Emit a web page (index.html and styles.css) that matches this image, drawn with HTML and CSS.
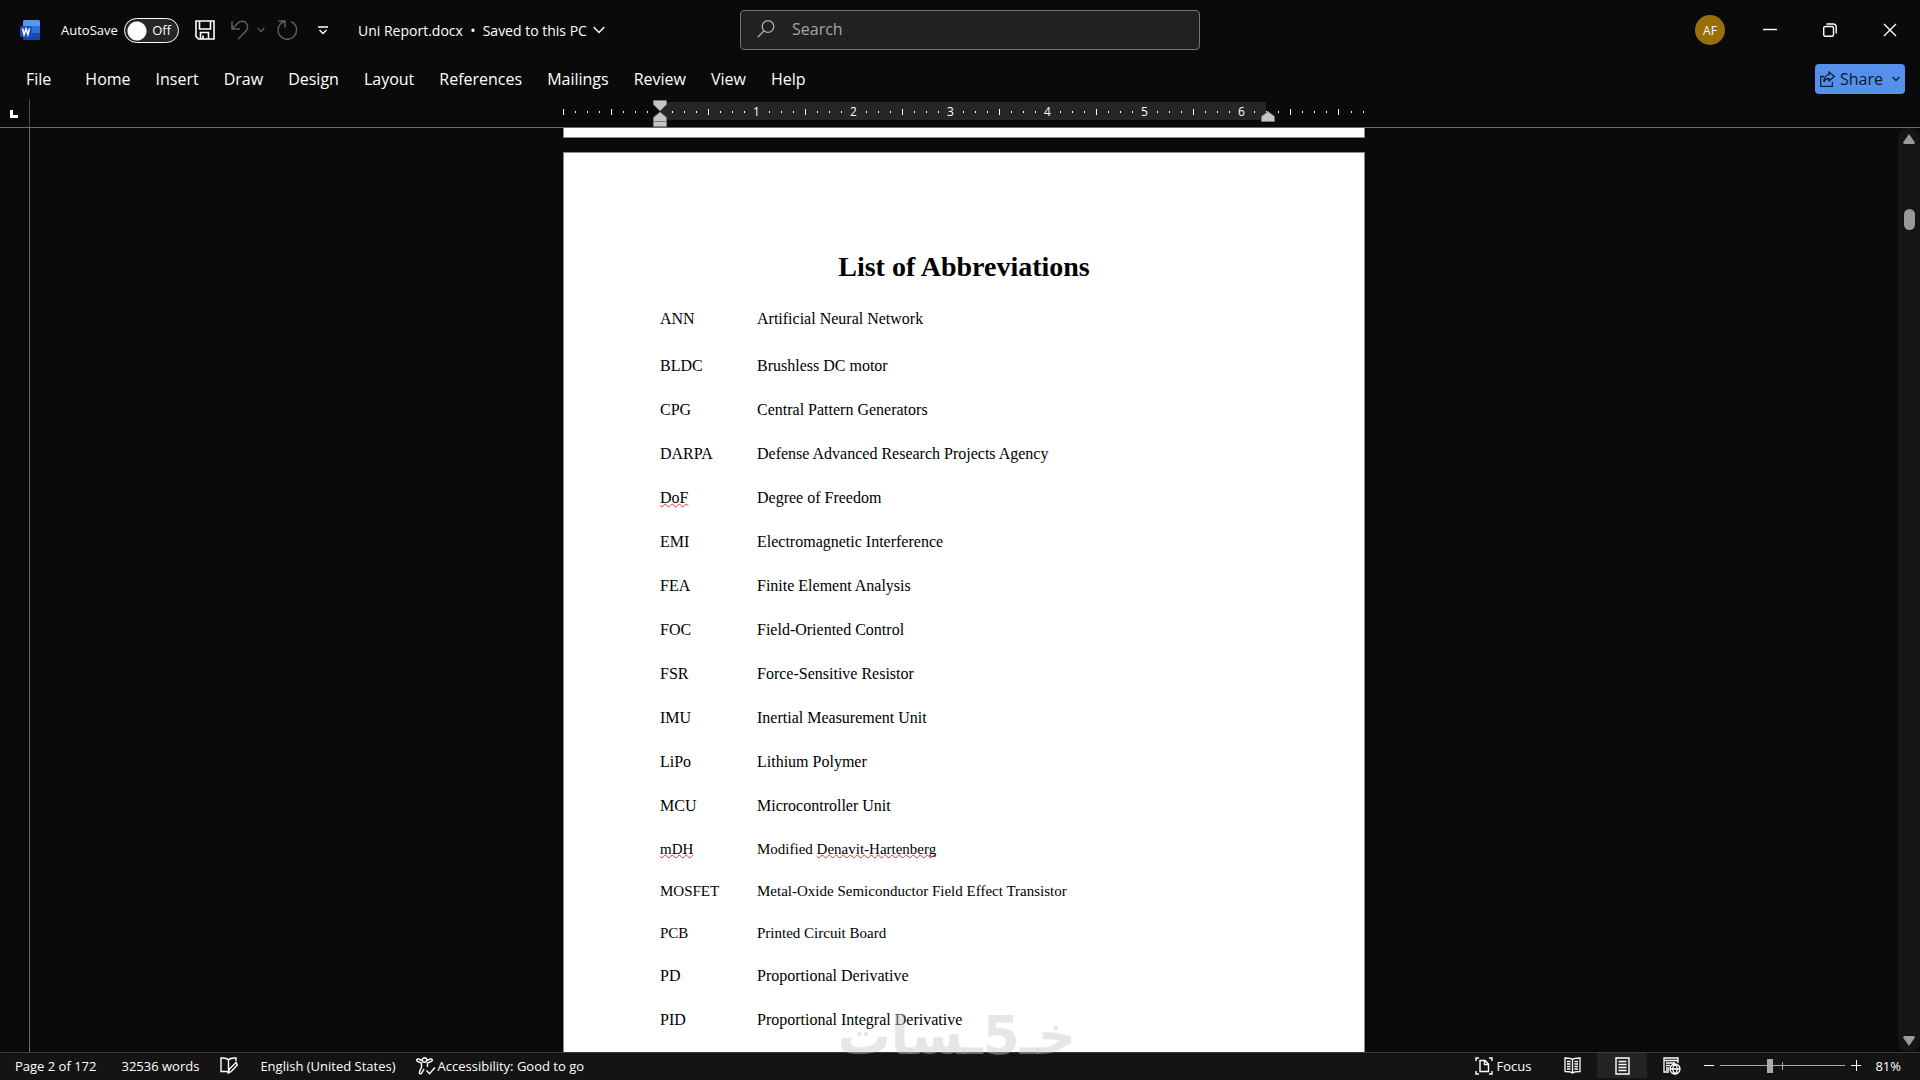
FILE: index.html
```html
<!DOCTYPE html>
<html lang="en">
<head>
    <meta charset="UTF-8">
    <title>Uni Report.docx</title>
    <link rel="stylesheet" href="styles.css">
</head>
<body>
<div id="app">
    <header id="titlebar">
        <div class="quick">
            <svg class="logo" width="20" height="20" viewBox="0 0 20 20">
                <rect x="3" y="0" width="17" height="20" rx="2" fill="#2f6fdc"/>
                <path d="M5 0h13a2 2 0 0 1 2 2v4H3V2a2 2 0 0 1 2-2z" fill="#5a97f2"/>
                <path d="M3 13h17v5a2 2 0 0 1-2 2H5a2 2 0 0 1-2-2z" fill="#1748ad"/>
                <rect x="0" y="6" width="12" height="11" rx="2" fill="#1b4fbd"/>
                <path d="M2.5 8.5l1.6 6 1.9-5.5 1.9 5.5 1.6-6" fill="none" stroke="#fff" stroke-width="1.6"/>
            </svg>
            <label for="autosave">AutoSave</label>
            <span class="switch">
                <input type="checkbox" id="autosave">
                <span>Off</span>
            </span>
            <button class="save" aria-label="Save">
                <svg width="20" height="20" viewBox="0 0 20 20" fill="none" stroke="#fff" stroke-width="1.6">
                    <path d="M1 1h18v18H3.500L1 16.500zM4.500 1v8h11V1M5.500 19v-6.500h8V19M8 15.500V19"/>
                </svg>
            </button>
            <button class="undo" aria-label="Undo">
                <svg width="18" height="20" viewBox="0 0 18 20" fill="none" stroke="#5c5c5c" stroke-width="1.5">
                    <path d="M1 1v8h8M1.500 8.500L7 3c3-3 7.500-2 9 1.200 1.300 2.800.5 5.300-1.500 7.300L7 19.300"/>
                </svg>
            </button>
            <button class="undo-more" aria-label="Undo list">
                <svg width="8" height="6" viewBox="0 0 8 6" fill="none" stroke="#5c5c5c" stroke-width="1.300"><path d="M.7 1L4 4.500 7.300 1"/></svg>
            </button>
            <button class="redo" aria-label="Repeat">
                <svg width="21" height="20" viewBox="0 0 21 20" fill="none" stroke="#5c5c5c" stroke-width="1.500">
                    <path d="M1.500 1H8v6.500M7.500 1.500C3.500 3 1 6 1 10a9.300 9.300 0 0 0 18.600 0c0-4-2.300-7-5.600-8.300"/>
                </svg>
            </button>
            <button class="customize" aria-label="Customize Quick Access Toolbar">
                <svg width="10" height="9" viewBox="0 0 10 9" fill="none" stroke="#fff" stroke-width="1.400"><path d="M0 1h10M1.500 4L5 7.500 8.500 4"/></svg>
            </button>
            <button class="doc-name">Uni Report.docx&nbsp; •&nbsp; Saved to this PC
                <svg width="12" height="8" viewBox="0 0 12 8" fill="none" stroke="#fff" stroke-width="1.400"><path d="M.7 1L6 6.500 11.300 1"/></svg>
            </button>
        </div>
        <div class="search">
            <svg width="18" height="18" viewBox="0 0 18 18" fill="none" stroke="#b0b0b0" stroke-width="1.300"><circle cx="11" cy="6.500" r="5.800"/><path d="M7 10.800L.6 17.400"/></svg>
            <input type="text" placeholder="Search" aria-label="Search">
        </div>
        <div class="window">
            <button class="avatar">AF</button>
            <button aria-label="Minimize"><svg width="14" height="14" viewBox="0 0 14 14"><path d="M0 6.500h14" stroke="#fff" stroke-width="1.400"/></svg></button>
            <button aria-label="Restore"><svg width="14" height="14" viewBox="0 0 14 14" fill="none" stroke="#fff" stroke-width="1.400"><rect x=".7" y="3.500" width="9.800" height="9.800" rx="1.500"/><path d="M3.500 1H10a3.200 3.200 0 0 1 3.200 3.200V10.500"/></svg></button>
            <button aria-label="Close"><svg width="14" height="14" viewBox="0 0 14 14"><path d="M1 1l12 12M13 1L1 13" stroke="#fff" stroke-width="1.400"/></svg></button>
        </div>
    </header>

    <nav id="tabs">
        <a class="file" href="#">File</a>
        <a href="#">Home</a>
        <a href="#">Insert</a>
        <a href="#">Draw</a>
        <a href="#">Design</a>
        <a href="#">Layout</a>
        <a href="#">References</a>
        <a href="#">Mailings</a>
        <a href="#">Review</a>
        <a href="#">View</a>
        <a href="#">Help</a>
        <button class="share">
            <svg width="15" height="16" viewBox="0 0 15 16" fill="none" stroke="#10203c" stroke-width="1.300"><path d="M4 5.500H.7v9.800h11.600V11M9 1l5.300 4.500L9 10V7.500C6.500 7.300 5 8.500 3.800 11 4 6.500 6 3.800 9 3.600z"/></svg>
            Share
            <svg class="arrow" width="8" height="6" viewBox="0 0 8 6" fill="none" stroke="#10203c" stroke-width="1.400"><path d="M.7 1L4 4.500 7.300 1"/></svg>
        </button>
    </nav>

    <div id="ruler">
        <div class="corner"><svg width="8" height="8" viewBox="0 0 8 8"><path d="M0 0h3v5h5v3H0z" fill="#fff"/></svg></div>
        <div class="track">
            <div class="scale">
                <div class="band"></div>
                <svg class="ticks" width="802" height="8">
                    <defs>
                        <pattern id="inch" x="0" y="0" width="97" height="8" patternUnits="userSpaceOnUse">
                            <path d="M12 3h1v2h-1zM24 3h1v2h-1zM36 3h1v2h-1zM48 1h1v6h-1zM60 3h1v2h-1zM72 3h1v2h-1zM84 3h1v2h-1z" fill="#fff"/>
                        </pattern>
                    </defs>
                    <rect width="802" height="8" fill="url(#inch)"/>
                    <path d="M0 1h1v6H0zM775 1h1v6h-1z" fill="#fff"/>
                </svg>
                <ol class="numbers">
                    <li>1</li>
                    <li>2</li>
                    <li>3</li>
                    <li>4</li>
                    <li>5</li>
                    <li>6</li>
                </ol>
                <svg class="indent-left" width="14" height="27" viewBox="0 0 14 27" fill="#c6c6c6" stroke="#777">
                    <path d="M.5.500h13v4L7 11 .5 4.500z"/>
                    <path d="M.5 26.500v-9L7 12l6.500 5.500v9zM.5 21.500h13"/>
                </svg>
                <svg class="indent-right" width="14" height="11" viewBox="0 0 14 11" fill="#c6c6c6" stroke="#777"><path d="M.5 10.500v-5L7 .5l6.500 5v5z"/></svg>
            </div>
        </div>
    </div>

    <main id="workspace">
        <div class="side"></div>
        <div class="pages">
            <div class="page previous"></div>
            <article class="page">
                <h1>List of Abbreviations</h1>
                <table>
                    <tr class="first"><td>ANN</td><td>Artificial Neural Network</td></tr>
                    <tr><td>BLDC</td><td>Brushless DC motor</td></tr>
                    <tr><td>CPG</td><td>Central Pattern Generators</td></tr>
                    <tr><td>DARPA</td><td>Defense Advanced Research Projects Agency</td></tr>
                    <tr><td><span class="typo">DoF</span></td><td>Degree of Freedom</td></tr>
                    <tr><td>EMI</td><td>Electromagnetic Interference</td></tr>
                    <tr><td>FEA</td><td>Finite Element Analysis</td></tr>
                    <tr><td>FOC</td><td>Field-Oriented Control</td></tr>
                    <tr><td>FSR</td><td>Force-Sensitive Resistor</td></tr>
                    <tr><td>IMU</td><td>Inertial Measurement Unit</td></tr>
                    <tr><td>LiPo</td><td>Lithium Polymer</td></tr>
                    <tr><td>MCU</td><td>Microcontroller Unit</td></tr>
                    <tr class="small"><td><span class="typo">mDH</span></td><td>Modified <span class="typo">Denavit-Hartenberg</span></td></tr>
                    <tr class="small"><td>MOSFET</td><td>Metal-Oxide Semiconductor Field Effect Transistor</td></tr>
                    <tr class="small"><td>PCB</td><td>Printed Circuit Board</td></tr>
                    <tr><td>PD</td><td>Proportional Derivative</td></tr>
                    <tr><td>PID</td><td>Proportional Integral Derivative</td></tr>
                </table>
            </article>
        </div>
        <div class="scrollbar">
            <svg width="12" height="10" viewBox="0 0 12 10"><path d="M6 0l6 8.500-1 1.500H1L0 8.500z" fill="#9a9a9a"/></svg>
            <div class="thumb"></div>
            <svg class="down" width="12" height="10" viewBox="0 0 12 10"><path d="M6 10l6-8.500L11 0H1L0 1.500z" fill="#9a9a9a"/></svg>
        </div>
    </main>

    <footer id="status">
        <span class="count">Page 2 of 172</span>
        <span class="words">32536 words</span>
        <button class="proof" aria-label="Proofing">
            <svg width="18" height="17" viewBox="0 0 18 17" fill="none" stroke="#fff" stroke-width="1.400"><path d="M8.500 3v11.500M8.500 3C7 1 4 .8 1 1v13.500h5c1.500 0 2 .5 2.500 1.500M8.500 3C10 1 13 .8 16 1v3M8.500 16l1-4L16 5.500l1.300 2.500-6 6.500z"/></svg>
        </button>
        <span class="language">English (United States)</span>
        <button class="access">
            <svg width="20" height="18" viewBox="0 0 20 18" fill="none" stroke="#fff" stroke-width="1.400"><circle cx="8.500" cy="3" r="2.200"/><path d="M6.500 3.500L2.500 2C1 1.500 0 3.500 1.500 4.300L5.500 6v4L3.500 15c-.5 1.800 1.500 2.600 2.300 1L8 12M10.500 3.500l4-1.500c1.500-.5 2.500 1.500 1 2.300L11.500 6v4M10.500 13.500l3 3.300L19 10.500"/></svg>
            Accessibility: Good to go
        </button>
        <button class="focus">
            <svg width="18" height="18" viewBox="0 0 18 18" fill="none" stroke="#fff" stroke-width="1.400"><path d="M1 4V1h3M14 1h3v3M17 14v3h-3M4 17H1v-3M5 3.500h5l3.500 3.500v7.500H5zM9.500 3.500V7.500h4"/></svg>
            Focus
        </button>
        <button class="view" aria-label="Read Mode">
            <svg width="17" height="17" viewBox="0 0 17 17" fill="none" stroke="#fff" stroke-width="1.300"><path d="M8.500 2.500C7 1 4 1 1 1v13.500c3 0 6 0 7.500 1.500 1.500-1.500 4.500-1.500 7.500-1.500V1c-3 0-6 0-7.500 1.500zM8.500 2.500V16M3 4.500h3.500M3 7h3.500M3 9.500h3.500M3 12h3.500M10.500 4.500H14M10.500 7H14M10.500 9.500H14M10.500 12H14"/></svg>
        </button>
        <button class="view selected" aria-label="Print Layout">
            <svg width="15" height="18" viewBox="0 0 15 18" fill="none" stroke="#fff" stroke-width="1.400"><path d="M1 1h13v16H1zM3.500 4.500h8M3.500 7.500h8M3.500 10.500h8M3.500 13.500h8"/></svg>
        </button>
        <button class="view" aria-label="Web Layout">
            <svg width="18" height="18" viewBox="0 0 18 18" fill="none" stroke="#fff" stroke-width="1.300"><path d="M6 15H1V1h14v5M1 3.500h14M3 6h9M3 8.500h4M3 11h3M3 13h3"/><circle cx="12" cy="12" r="5"/><path d="M7 12h10M12 7c-3 3-3 7 0 10M12 7c3 3 3 7 0 10"/></svg>
        </button>
        <button class="zoom-out" aria-label="Zoom Out"><svg width="11" height="11" viewBox="0 0 11 11"><path d="M0 5.500h10" stroke="#fff"/></svg></button>
        <input type="range" min="0" max="100" value="39" aria-label="Zoom">
        <button class="zoom-in" aria-label="Zoom In"><svg width="11" height="11" viewBox="0 0 11 11"><path d="M0 5.500h10M5.500 0v11" stroke="#fff"/></svg></button>
        <span class="percent">81%</span>
    </footer>
    <div class="watermark" lang="ar" dir="rtl">خـ5ـسات</div>
</div>
</body>
</html>
```
FILE: styles.css
```css
*{
    margin: 0;
    padding: 0;
    box-sizing: border-box;
}
ol{
    list-style: none;
}
a{
    color: inherit;
    text-decoration: none;
}
button{
    border: 0;
    background: none;
    color: inherit;
    font: inherit;
    white-space: nowrap;
    display: flex;
    align-items: center;
    justify-content: center;
}
svg{
    display: block;
    flex: none;
}
body{
    background-color: #0a0a0a;
    color: #fff;
    font-family: "Open Sans", sans-serif;
}
#app{
    height: 100vh;
    display: flex;
    flex-direction: column;
    position: relative;
    overflow: hidden;
}

/* title bar */
#titlebar{
    height: 60px;
    flex: none;
    display: grid;
    grid-template-columns: 1fr 460px 1fr;
    align-items: center;
    padding-left: 20px;
}
.quick{
    display: flex;
    align-items: center;
    font-size: 13px;
}
.quick label{
    margin-left: 21px;
    width: 63px;
}
.switch{
    position: relative;
    width: 55px;
    height: 25px;
}
.switch input{
    appearance: none;
    display: block;
    width: 55px;
    height: 25px;
    border: 1px solid #fff;
    border-radius: 13px;
    background: radial-gradient(circle at 12px 12px, #fff 9px, #262626 10px);
}
.switch span{
    position: absolute;
    right: 8px;
    top: 3px;
}
.save{
    margin-left: 16px;
}
.undo{
    margin-left: 16px;
}
.undo-more{
    margin-left: 8px;
}
.redo{
    margin-left: 12px;
}
.customize{
    margin-left: 20px;
}
.doc-name{
    margin-left: 30px;
    font-size: 14px;
    gap: 6px;
}
.search{
    height: 40px;
    display: flex;
    align-items: center;
    gap: 17px;
    padding: 0 16px 2px;
    background-color: #212121;
    border: 1px solid #757575;
    border-radius: 4px;
}
.search input{
    flex: 1;
    border: 0;
    outline: 0;
    background: none;
    color: #fff;
    font: 16px "Open Sans", sans-serif;
}
.search input::placeholder{
    color: #a6a6a6;
}
.window{
    display: flex;
    justify-content: flex-end;
    align-items: center;
}
.window button{
    width: 60px;
    height: 60px;
}
.window .avatar{
    width: 30px;
    height: 30px;
    margin-right: 15px;
    border-radius: 50%;
    background-color: #986f0b;
    font-size: 12px;
}

/* ribbon tabs */
#tabs{
    height: 39px;
    flex: none;
    display: flex;
    align-items: center;
    gap: 25px;
    padding: 0 15px 1px 26px;
    font-size: 16px;
}
#tabs .file{
    margin-right: 9px;
}
.share{
    margin-left: auto;
    width: 90px;
    height: 30px;
    gap: 5px;
    border-radius: 4px;
    background-color: #5790eb;
    color: #0a1830;
}
.share .arrow{
    margin-left: 4px;
}

/* ruler */
#ruler{
    height: 29px;
    flex: none;
    display: grid;
    grid-template-columns: 30px 1fr 22px;
    border-bottom: 1px solid #6a6a6a;
}
.corner{
    border-right: 1px solid #4c4c4c;
    padding: 11px 0 0 10px;
}
.scale{
    position: relative;
    width: 802px;
    height: 28px;
    margin: 0 auto;
}
.band{
    position: absolute;
    left: 97px;
    top: 3px;
    width: 606px;
    height: 18px;
    background-color: #262626;
}
.ticks{
    position: absolute;
    left: 0;
    top: 9px;
}
.numbers{
    position: absolute;
    left: 145px;
    top: 4px;
    display: flex;
    font-size: 12px;
    line-height: 18px;
}
.numbers li{
    width: 97px;
    text-align: center;
}
.indent-left{
    position: absolute;
    left: 90px;
    top: 1px;
}
.indent-right{
    position: absolute;
    left: 698px;
    top: 12px;
}

/* document */
#workspace{
    flex: 1;
    min-height: 0;
    display: grid;
    grid-template-columns: 30px 1fr 22px;
    overflow: hidden;
}
.side{
    border-right: 1px solid #6a6a6a;
}
.pages{
    overflow: hidden;
}
.page{
    width: 802px;
    min-height: 1135px;
    margin: 0 auto;
    padding: 96px;
    border: 1px solid #8a8a8a;
    background-color: #fff;
    color: #000;
    font-family: "Liberation Serif", serif;
    font-size: 16px;
}
.previous{
    min-height: 0;
    height: 10px;
    padding: 0;
    border-top: 0;
    margin-bottom: 14px;
}
.page h1{
    font-size: 28px;
    line-height: 36px;
    text-align: center;
}
.page table{
    border-collapse: collapse;
    margin-top: 12px;
    width: 100%;
}
.page td{
    height: 44px;
    padding: 0;
    vertical-align: top;
    line-height: 44px;
}
.page td:first-child{
    width: 97px;
}
.page .first td{
    height: 47px;
}
.page .small td{
    height: 42px;
    font-size: 15px;
    line-height: 42px;
}
.typo{
    text-decoration: underline wavy #e33 1px;
    text-underline-offset: 0;
    text-decoration-skip-ink: none;
}
.scrollbar{
    display: flex;
    flex-direction: column;
    align-items: center;
    padding: 6px 0;
    background-color: #151515;
    border-radius: 10px;
}
.thumb{
    width: 11px;
    height: 21px;
    margin-top: 65px;
    border-radius: 6px;
    background-color: #9a9a9a;
}
.scrollbar .down{
    margin-top: auto;
}

/* status bar */
#status{
    height: 28px;
    flex: none;
    display: flex;
    align-items: center;
    padding: 0 19px 2px 15px;
    border-top: 1px solid #3a3a3a;
    background-color: #141414;
    font-size: 13px;
    white-space: nowrap;
}
.words{
    margin-left: 25px;
}
.proof{
    margin-left: 21px;
}
.language{
    margin-left: 22px;
}
.access{
    margin-left: 20px;
    gap: 2px;
}
.focus{
    margin-left: auto;
    margin-right: 16px;
    gap: 3px;
}
.view{
    width: 50px;
    height: 25px;
}
.view.selected{
    background-color: #242424;
}
.zoom-out{
    margin-left: 7px;
}
#status input{
    appearance: none;
    width: 125px;
    height: 14px;
    margin: 0 6px 0 5px;
    background: linear-gradient(#aaa, #aaa) center / 100% 1px no-repeat,
                linear-gradient(#aaa, #aaa) center / 1px 8px no-repeat;
}
#status input::-webkit-slider-thumb{
    appearance: none;
    width: 6px;
    height: 14px;
    background-color: #ababab;
}
.percent{
    margin-left: 13px;
}
.watermark{
    position: absolute;
    right: 844px;
    bottom: 14px;
    font: bold 53px/60px "DejaVu Sans", sans-serif;
    color: rgba(200, 200, 200, .45);
    pointer-events: none;
}
```
